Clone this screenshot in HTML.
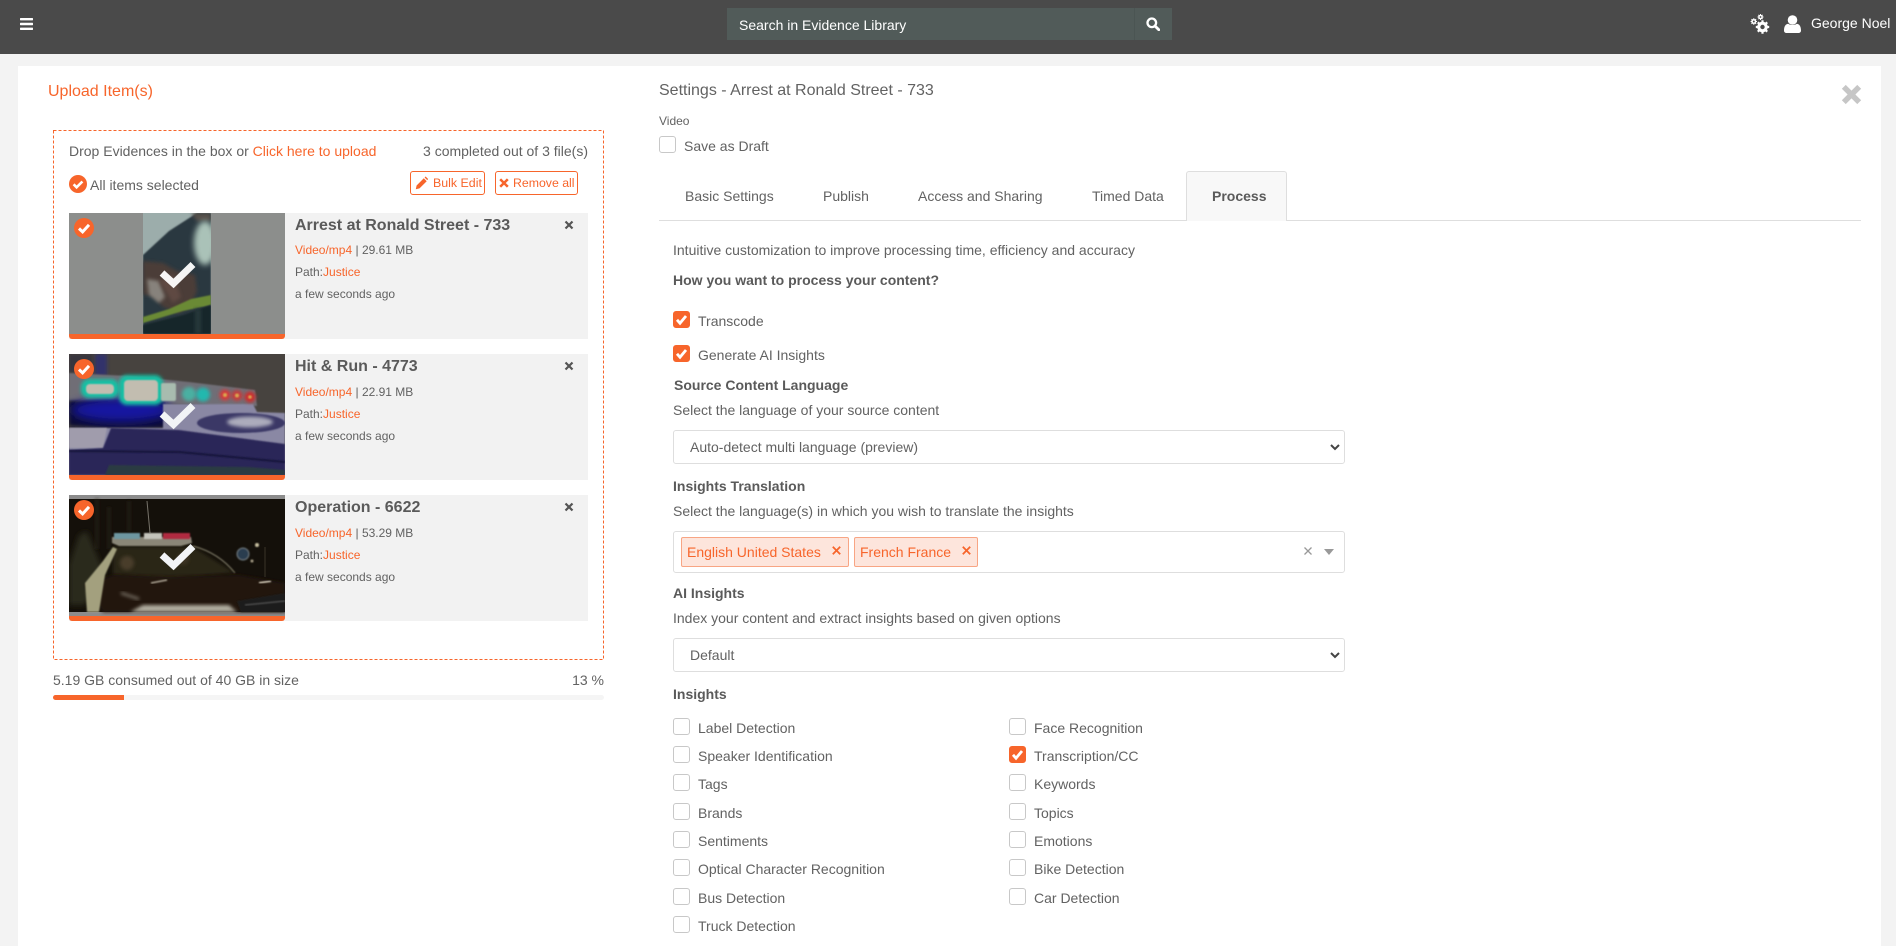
<!DOCTYPE html>
<html lang="en"><head><meta charset="utf-8"><title>Upload Items</title>
<style>
*{box-sizing:border-box}
html,body{margin:0;padding:0}
body{width:1896px;height:946px;overflow:hidden;position:relative;background:#f3f3f3;font-family:"Liberation Sans",sans-serif;color:#626262;font-size:14px}
.a,.t,svg.i{position:absolute}
.t{white-space:nowrap;line-height:20px}
.o{color:#f7652b}
.b{font-weight:700;color:#5a5a5a}
.hd{left:0;top:0;width:1896px;height:54px;background:#4a4a4a}
.pg{left:18px;top:66px;width:1863px;height:880px;background:#fff}
.cb{position:absolute;width:17px;height:17px;border:1px solid #c8c8c8;border-radius:3px;background:#fff}
.cb.on{background:#f7652b;border-color:#f7652b}
.cb.on svg{position:absolute;left:-1px;top:-1px;display:block}
.card{position:absolute;left:69px;width:519px;height:126px;background:#f2f2f2}
.bar{position:absolute;left:0;top:121px;width:216px;height:5px;background:#f7652b;border-radius:0 0 3px 3px}
.thumb{position:absolute;left:0;top:0;width:216px;height:121px;overflow:hidden}
.ttl{left:226px;top:3px;font-size:16px;font-weight:700;color:#5a5a5a}
.m{left:226px;font-size:12px}
.sel{position:absolute;left:673px;width:672px;background:#fff;border:1px solid #dedede;border-radius:3px}
.tag{position:absolute;top:537px;height:30px;background:#fde5dc;border:1px solid #f8a584;border-radius:2px;color:#f7652b;line-height:28px;padding-left:5px;white-space:nowrap}
</style></head><body>
<div class="a hd"></div>
<div class="a pg"></div>

<!-- header -->
<svg class="i" style="left:20px;top:18px" width="13" height="12" viewBox="0 0 13 12"><rect y="0" width="13" height="2.400" rx=".6" fill="#fff"/><rect y="4.800" width="13" height="2.400" rx=".6" fill="#fff"/><rect y="9.600" width="13" height="2.400" rx=".6" fill="#fff"/></svg>
<div class="a" style="left:727px;top:8px;width:445px;height:32px;background:#515b59"></div>
<div class="a" style="left:1134px;top:8px;width:1px;height:32px;background:#4b5553"></div>
<div class="t" style="left:739px;top:14.500px;color:#fff;font-size:14px">Search in Evidence Library</div>
<svg class="i" style="left:1146px;top:17px" width="14" height="14" viewBox="0 0 14 14"><circle cx="5.800" cy="5.800" r="4.300" fill="none" stroke="#fff" stroke-width="2.300"/><path d="M9 9l3.800 3.800" stroke="#fff" stroke-width="2.800" stroke-linecap="round"/></svg>
<svg class="i" style="left:1750px;top:14px" width="20" height="20" viewBox="0 0 20 20">
 <path d="M12.500 6.300v13.400M5.800 13h13.400M7.800 8.300l9.400 9.400M17.200 8.300l-9.400 9.400" stroke="#fff" stroke-width="2.200"/>
 <circle cx="12.500" cy="13" r="5.300" fill="#fff"/><circle cx="12.500" cy="13" r="2.200" fill="#4a4a4a"/>
 <path d="M3.800 4.300v6.400M.6 7.500h6.400M1.500 5.200l4.600 4.600M6.100 5.200l-4.600 4.600" stroke="#fff" stroke-width="1.100"/>
 <circle cx="3.800" cy="7.500" r="2.500" fill="#fff"/><circle cx="3.800" cy="7.500" r="1" fill="#4a4a4a"/>
 <path d="M10.500 0v6M7.500 3h6M8.400.9l4.200 4.200M12.600.9L8.400 5.100" stroke="#fff" stroke-width="1"/>
 <circle cx="10.500" cy="3" r="2.300" fill="#fff"/><circle cx="10.500" cy="3" r=".9" fill="#4a4a4a"/>
</svg>
<svg class="i" style="left:1784px;top:15px" width="17" height="18" viewBox="0 0 17 18" fill="#fff"><circle cx="8.500" cy="5" r="4.800"/><path d="M0 15.500c0-4.200 1.600-6.500 4.200-6.800 2.600 1.800 6 1.800 8.600 0 2.600.3 4.200 2.600 4.200 6.800 0 1.600-1.100 2.500-2.600 2.500H2.600C1.100 18 0 17.100 0 15.500z"/></svg>
<div class="t" style="left:1811px;top:13px;color:#fff;font-size:14px">George Noel</div>

<!-- left -->
<div class="t o" style="left:48px;top:81.500px;font-size:16px">Upload Item(s)</div>
<svg class="i" style="left:53px;top:130px" width="551" height="530" viewBox="0 0 551 530"><rect x=".5" y=".5" width="550" height="529" fill="none" stroke="#f7652b" stroke-dasharray="3 2"/></svg>
<div class="t" style="left:69px;top:141px">Drop Evidences in the box or <span class="o">Click here to upload</span></div>
<div class="t" style="right:1308px;top:141px">3 completed out of 3 file(s)</div>
<svg class="i" style="left:69px;top:175px" width="18" height="18" viewBox="0 0 18 18"><circle cx="9" cy="9" r="9" fill="#f7652b"/><path d="M4.600 9.300l3 3 5.800-5.800" fill="none" stroke="#fff" stroke-width="2.600"/></svg>
<div class="t" style="left:90px;top:175px">All items selected</div>
<div class="a" style="left:410px;top:171px;width:75px;height:24px;border:1px solid #f7652b;border-radius:3px"></div>
<svg class="i" style="left:415px;top:176px" width="13" height="14" viewBox="0 0 13 14"><path d="M.8 13.200l.8-3.700L8.800 2.300l2.900 2.900-7.200 7.200zM9.600 1.500l1-1 2.400 2.400 0 .4-.8.800z" fill="#f7652b"/></svg>
<div class="t o" style="left:433px;top:173px;font-size:12.400px">Bulk Edit</div>
<div class="a" style="left:495px;top:171px;width:83px;height:24px;border:1px solid #f7652b;border-radius:3px"></div>
<svg class="i" style="left:499px;top:178px" width="10" height="10" viewBox="0 0 10 10"><path d="M1.200 1.200l7.600 7.600M8.800 1.200L1.200 8.800" stroke="#f7652b" stroke-width="2.500"/></svg>
<div class="t o" style="left:513px;top:173px;font-size:12.300px">Remove all</div>

<!-- card 1 -->
<div class="card" style="top:213px">
 <div class="thumb"><svg width="216" height="121" viewBox="0 0 216 121">
  <defs>
   <filter id="f1" x="-30%" y="-30%" width="160%" height="160%"><feGaussianBlur stdDeviation="1.800"/></filter>
   <filter id="f0" x="-20%" y="-20%" width="140%" height="140%"><feGaussianBlur stdDeviation=".8"/></filter>
   <filter id="f3" x="-40%" y="-40%" width="180%" height="180%"><feGaussianBlur stdDeviation="3"/></filter>
   <filter id="f5" x="-60%" y="-60%" width="220%" height="220%"><feGaussianBlur stdDeviation="5"/></filter>
   <clipPath id="c1"><rect x="74" width="68" height="121"/></clipPath>
  </defs>
  <rect width="216" height="121" fill="#8c8e8c"/>
  <g clip-path="url(#c1)">
   <rect x="74" width="68" height="121" fill="#9cadab"/>
   <path d="M74 42L100 18 128 0h14v121H74z" fill="#2c3840" filter="url(#f0)"/>
   <path d="M122 0h20v8h-14z" fill="#55504a" filter="url(#f1)"/>
   <ellipse cx="136" cy="30" rx="11" ry="22" fill="#aac2b8" filter="url(#f3)"/>
   <path d="M74 48l20 2 14 8 18 4 2 16-6 14-12 8-16-6-10-12-10 0z" fill="#4b3c37" filter="url(#f1)"/>
   <path d="M78 66l12 2 6 16-6 6-10-8z" fill="#87827c" filter="url(#f1)"/>
   <path d="M90 68l14-6 8 22-8 6z" fill="#5e4a42" filter="url(#f1)"/>
   <path d="M74 104l26-8 22-10 20-4v10l-28 6-40 12z" fill="#6b8a35" filter="url(#f0)"/>
   <path d="M74 112l40-10 28-10v29H74z" fill="#182729" filter="url(#f0)"/>
   <rect x="126" y="96" width="6" height="25" fill="#25383a" filter="url(#f1)"/>
  </g>
 </svg></div>
 <div class="bar"></div>
 <div class="t ttl">Arrest at Ronald Street - 733</div>
 <div class="t m" style="top:27px"><span class="o">Video/mp4</span> | 29.61 MB</div>
 <div class="t m" style="top:49px">Path:<span class="o">Justice</span></div>
 <div class="t m" style="top:71px">a few seconds ago</div>
</div>

<!-- card 2 -->
<div class="card" style="top:354px">
 <div class="thumb"><svg width="216" height="121" viewBox="0 0 216 121">
  <rect width="216" height="121" fill="#47433f"/>
  <rect x="26" width="12" height="22" fill="#33336a" filter="url(#f1)"/>
  <path d="M0 0H24V20L0 18z" fill="#38343c" filter="url(#f1)"/>
  <path d="M0 19L60 22 120 28 186 36 188 52 120 50 60 49 0 47z" fill="#6f6e76" filter="url(#f0)"/>
  <path d="M0 47H94L104 66 96 74H40L0 72z" fill="#0c0c30" filter="url(#f1)"/>
  <ellipse cx="52" cy="56" rx="50" ry="12" fill="#1818a0" filter="url(#f5)"/>
  <path d="M94 50H184L188 58 216 59V121H0V74H36L94 74z" fill="#8a88a4" filter="url(#f0)"/>
  <ellipse cx="172" cy="69" rx="44" ry="10" fill="#3a3866" filter="url(#f0)"/>
  <ellipse cx="181" cy="68" rx="23" ry="5.500" fill="#acacbc" filter="url(#f1)"/>
  <path d="M0 74H38L34 94H0z" fill="#a09cac" filter="url(#f0)"/>
  <path d="M34 94L42 74 110 76 216 90V121H0V96z" fill="#2b2858" filter="url(#f0)"/>
  <path d="M0 97L110 98 216 108" fill="none" stroke="#14123a" stroke-width="2" filter="url(#f0)"/>
  <path d="M36 121L40 111 180 113 216 116V121z" fill="#2a3a42" filter="url(#f0)"/>
  <rect x="12" y="25" width="38" height="19" rx="8" fill="#14c0a4" filter="url(#f1)"/>
  <rect x="17" y="30" width="28" height="10" rx="4" fill="#c2bdb0" filter="url(#f0)"/>
  <rect x="50" y="21" width="44" height="30" rx="8" fill="#14c0a4" filter="url(#f1)"/>
  <rect x="55" y="26" width="34" height="21" rx="4" fill="#c2bdb0" filter="url(#f0)"/>
  <rect x="92" y="29" width="15" height="18" rx="2" fill="#a8bcaf" filter="url(#f0)"/>
  <circle cx="120" cy="40" r="7" fill="#48b0a2" filter="url(#f1)"/>
  <circle cx="134" cy="40.500" r="7" fill="#22b8ae" filter="url(#f1)"/>
  <circle cx="156" cy="41" r="5.500" fill="#d83838" filter="url(#f1)"/>
  <circle cx="168" cy="41.500" r="5.500" fill="#c83a3a" filter="url(#f1)"/>
  <circle cx="181" cy="43" r="5.500" fill="#d02a2a" filter="url(#f1)"/>
  <circle cx="156" cy="41" r="2" fill="#d8a650" filter="url(#f0)"/><circle cx="168" cy="41.500" r="2" fill="#d8a650" filter="url(#f0)"/><circle cx="181" cy="43" r="1.800" fill="#d8a650" filter="url(#f0)"/>
 </svg></div>
 <div class="bar"></div>
 <div class="t ttl">Hit &amp; Run - 4773</div>
 <div class="t m" style="top:28px"><span class="o">Video/mp4</span> | 22.91 MB</div>
 <div class="t m" style="top:50px">Path:<span class="o">Justice</span></div>
 <div class="t m" style="top:72px">a few seconds ago</div>
</div>

<!-- card 3 -->
<div class="card" style="top:495px">
 <div class="thumb"><svg width="216" height="121" viewBox="0 0 216 121">
  <rect width="216" height="121" fill="#8c8c8c"/>
  <rect y="4" width="216" height="113" fill="#14100a"/>
  <path d="M0 70L10 40 18 36 28 60 36 80 16 110H0z" fill="#2a2a1a" filter="url(#f3)"/>
  <path d="M40 12v42M28 4v50M60 6v30" stroke="#2c281e" stroke-width="2" filter="url(#f1)"/>
  <path d="M78 6l3 32" stroke="#77736a" stroke-width="1"/>
  <path d="M44 52H124L166 78 100 84 44 80z" fill="#2b2516" filter="url(#f1)"/>
  <path d="M124 51Q150 58 166 78" fill="none" stroke="#8a8670" stroke-width="1" filter="url(#f0)"/>
  <path d="M16 90L44 80 100 82 170 80 216 88V117H34z" fill="#211310" filter="url(#f1)"/>
  <path d="M16 88L34 66 44 52 48 54 36 80 30 117H18z" fill="#a3a07e" filter="url(#f0)"/>
  <path d="M43 42H122L123 48 112 51H50L43 48z" fill="#8a8678" filter="url(#f0)"/>
  <rect x="45" y="38" width="26" height="6" fill="#6d96a0" filter="url(#f0)"/>
  <rect x="75" y="38" width="18" height="6" fill="#c4c4bc" filter="url(#f0)"/>
  <rect x="94" y="38" width="27" height="6" fill="#b02c40" filter="url(#f0)"/>
  <circle cx="174" cy="59" r="6" fill="#2c3e50" stroke="#707a80" filter="url(#f0)"/>
  <circle cx="188" cy="50" r="2" fill="#c8bfa0" filter="url(#f0)"/>
  <circle cx="183" cy="66" r="1.500" fill="#a89f88" filter="url(#f0)"/>
  <path d="M196 52v30" stroke="#3a3428" stroke-width="1"/>
  <path d="M61 117L74 110H160L168 117z" fill="#b2aea0" filter="url(#f1)"/>
  <path d="M168 106L216 98V117H172z" fill="#1c1c1c" filter="url(#f0)"/>
  <path d="M176 110l40-4" stroke="#555" stroke-width="1.200" filter="url(#f0)"/>
  <path d="M82 88l16-3" stroke="#b0a898" stroke-width="1.500" filter="url(#f0)"/>
  <path d="M190 88l12-2" stroke="#c0b8a8" stroke-width="2" filter="url(#f0)"/>
  <path d="M52 98l18 6" stroke="#8a8478" stroke-width="2" filter="url(#f1)"/>
  <circle cx="58" cy="68" r="7" fill="#4a3c2c" filter="url(#f1)"/>
  <circle cx="114" cy="64" r="6" fill="#3a3020" filter="url(#f1)"/>
 </svg></div>
 <div class="bar"></div>
 <div class="t ttl">Operation - 6622</div>
 <div class="t m" style="top:28px"><span class="o">Video/mp4</span> | 53.29 MB</div>
 <div class="t m" style="top:50px">Path:<span class="o">Justice</span></div>
 <div class="t m" style="top:72px">a few seconds ago</div>
</div>

<!-- card overlays -->
<svg class="i" style="left:69px;top:213px" width="216" height="408" viewBox="0 0 216 408">
 <g><circle cx="15" cy="15" r="10" fill="#f7652b"/><path d="M10 15.500l3.600 3.400 6.400-7" fill="none" stroke="#fff" stroke-width="3"/><path d="M93 60l11.500 10.500 19.500-19" fill="none" stroke="#fff" stroke-width="7" opacity=".95"/></g>
 <g transform="translate(0 141)"><circle cx="15" cy="15" r="10" fill="#f7652b"/><path d="M10 15.500l3.600 3.400 6.400-7" fill="none" stroke="#fff" stroke-width="3"/><path d="M93 60l11.500 10.500 19.500-19" fill="none" stroke="#f2f4f6" stroke-width="7"/></g>
 <g transform="translate(0 282)"><circle cx="15" cy="15" r="10" fill="#f7652b"/><path d="M10 15.500l3.600 3.400 6.400-7" fill="none" stroke="#fff" stroke-width="3"/><path d="M93 60l11.500 10.500 19.500-19" fill="none" stroke="#f2f4f6" stroke-width="7"/></g>
</svg>
<svg class="i" style="left:564px;top:220px" width="10" height="10" viewBox="0 0 10 10"><path d="M1.500 1.500l7 7M8.500 1.500l-7 7" stroke="#555" stroke-width="2.200"/></svg>
<svg class="i" style="left:564px;top:361px" width="10" height="10" viewBox="0 0 10 10"><path d="M1.500 1.500l7 7M8.500 1.500l-7 7" stroke="#555" stroke-width="2.200"/></svg>
<svg class="i" style="left:564px;top:502px" width="10" height="10" viewBox="0 0 10 10"><path d="M1.500 1.500l7 7M8.500 1.500l-7 7" stroke="#555" stroke-width="2.200"/></svg>

<div class="t" style="left:53px;top:670px">5.19 GB consumed out of 40 GB in size</div>
<div class="t" style="right:1292px;top:670px">13 %</div>
<div class="a" style="left:53px;top:695px;width:551px;height:5px;background:#f5f5f5;border-radius:3px"></div>
<div class="a" style="left:53px;top:695px;width:71px;height:5px;background:#f7652b;border-radius:3px 0 0 3px"></div>

<!-- right -->
<div class="t" style="left:659px;top:81px;font-size:16px">Settings - Arrest at Ronald Street - 733</div>
<div class="t" style="left:659px;top:111px;font-size:12px">Video</div>
<div class="cb" style="left:659px;top:136px"></div>
<div class="t" style="left:684px;top:136px">Save as Draft</div>
<svg class="i" style="left:1841px;top:84px" width="21" height="21" viewBox="0 0 21 21"><path d="M2.800 2.800l15.400 15.400M18.200 2.800L2.800 18.200" stroke="#c6c6c6" stroke-width="5.500"/></svg>

<div class="t" style="left:685px;top:186px">Basic Settings</div>
<div class="t" style="left:823px;top:186px">Publish</div>
<div class="t" style="left:918px;top:186px">Access and Sharing</div>
<div class="t" style="left:1092px;top:186px">Timed Data</div>
<div class="a" style="left:659px;top:220px;width:1202px;height:1px;background:#dedede"></div>
<div class="a" style="left:1186px;top:171px;width:101px;height:50px;background:#f8f8f8;border:1px solid #dedede;border-bottom:0;border-radius:3px 3px 0 0"></div>
<div class="t b" style="left:1212px;top:186px">Process</div>

<div class="t" style="left:673px;top:240px">Intuitive customization to improve processing time, efficiency and accuracy</div>
<div class="t b" style="left:673px;top:270px">How you want to process your content?</div>
<div class="cb on" style="left:673px;top:311px"><svg width="17" height="17" viewBox="0 0 17 17"><path d="M4 8.800l3 3.400 6-7.200" fill="none" stroke="#fff" stroke-width="2.800"/></svg></div>
<div class="t" style="left:698px;top:311px">Transcode</div>
<div class="cb on" style="left:673px;top:345px"><svg width="17" height="17" viewBox="0 0 17 17"><path d="M4 8.800l3 3.400 6-7.200" fill="none" stroke="#fff" stroke-width="2.800"/></svg></div>
<div class="t" style="left:698px;top:345px">Generate AI Insights</div>
<div class="t b" style="left:674px;top:375px">Source Content Language</div>
<div class="t" style="left:673px;top:400px">Select the language of your source content</div>
<div class="sel" style="top:430px;height:34px"></div>
<div class="t" style="left:690px;top:437px">Auto-detect multi language (preview)</div>
<svg class="i" style="left:1330px;top:444px" width="10" height="7" viewBox="0 0 10 7"><path d="M1 1l4 4 4-4" fill="none" stroke="#444" stroke-width="2"/></svg>
<div class="t b" style="left:673px;top:476px">Insights Translation</div>
<div class="t" style="left:673px;top:501px">Select the language(s) in which you wish to translate the insights</div>
<div class="sel" style="top:531px;height:42px"></div>
<div class="tag" style="left:681px;width:168px">English United States</div>
<div class="tag" style="left:854px;width:124px">French France</div>
<svg class="i" style="left:832px;top:546px" width="9" height="9" viewBox="0 0 9 9"><path d="M.8.800l7.400 7.400M8.200.800L.8 8.200" stroke="#f7652b" stroke-width="1.800"/></svg>
<svg class="i" style="left:962px;top:546px" width="9" height="9" viewBox="0 0 9 9"><path d="M.8.800l7.400 7.400M8.200.800L.8 8.200" stroke="#f7652b" stroke-width="1.800"/></svg>
<svg class="i" style="left:1304px;top:547px" width="8" height="8" viewBox="0 0 8 8"><path d="M.5.500l7 7M7.500.500l-7 7" stroke="#999" stroke-width="1.300"/></svg>
<svg class="i" style="left:1324px;top:549px" width="10" height="6" viewBox="0 0 10 6"><path d="M0 0h10L5 6z" fill="#999"/></svg>
<div class="t b" style="left:673px;top:583px">AI Insights</div>
<div class="t" style="left:673px;top:608px">Index your content and extract insights based on given options</div>
<div class="sel" style="top:638px;height:34px"></div>
<div class="t" style="left:690px;top:645px">Default</div>
<svg class="i" style="left:1330px;top:652px" width="10" height="7" viewBox="0 0 10 7"><path d="M1 1l4 4 4-4" fill="none" stroke="#444" stroke-width="2"/></svg>
<div class="t b" style="left:673px;top:684px">Insights</div>

<div class="cb" style="left:673px;top:718px"></div><div class="t" style="left:698px;top:718px">Label Detection</div>
<div class="cb" style="left:1009px;top:718px"></div><div class="t" style="left:1034px;top:718px">Face Recognition</div>
<div class="cb" style="left:673px;top:746px"></div><div class="t" style="left:698px;top:746px">Speaker Identification</div>
<div class="cb on" style="left:1009px;top:746px"><svg width="17" height="17" viewBox="0 0 17 17"><path d="M4 8.800l3 3.400 6-7.200" fill="none" stroke="#fff" stroke-width="2.800"/></svg></div><div class="t" style="left:1034px;top:746px">Transcription/CC</div>
<div class="cb" style="left:673px;top:774px"></div><div class="t" style="left:698px;top:774px">Tags</div>
<div class="cb" style="left:1009px;top:774px"></div><div class="t" style="left:1034px;top:774px">Keywords</div>
<div class="cb" style="left:673px;top:803px"></div><div class="t" style="left:698px;top:803px">Brands</div>
<div class="cb" style="left:1009px;top:803px"></div><div class="t" style="left:1034px;top:803px">Topics</div>
<div class="cb" style="left:673px;top:831px"></div><div class="t" style="left:698px;top:831px">Sentiments</div>
<div class="cb" style="left:1009px;top:831px"></div><div class="t" style="left:1034px;top:831px">Emotions</div>
<div class="cb" style="left:673px;top:859px"></div><div class="t" style="left:698px;top:859px">Optical Character Recognition</div>
<div class="cb" style="left:1009px;top:859px"></div><div class="t" style="left:1034px;top:859px">Bike Detection</div>
<div class="cb" style="left:673px;top:888px"></div><div class="t" style="left:698px;top:888px">Bus Detection</div>
<div class="cb" style="left:1009px;top:888px"></div><div class="t" style="left:1034px;top:888px">Car Detection</div>
<div class="cb" style="left:673px;top:916px"></div><div class="t" style="left:698px;top:916px">Truck Detection</div>
</body></html>
